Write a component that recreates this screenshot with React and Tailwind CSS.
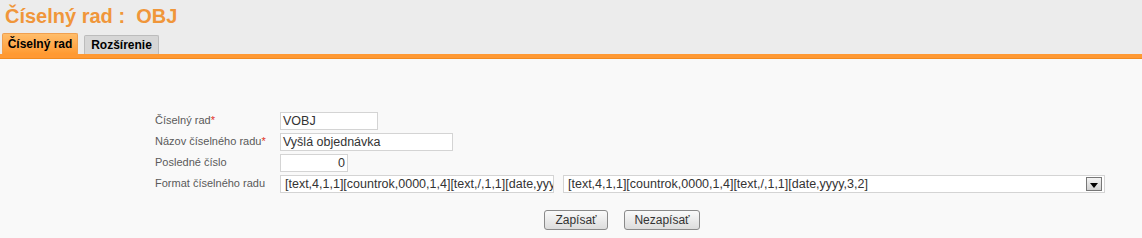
import React from "react";

function Row({ label, req, children }) {
  return (
    <div className="flex items-center h-[21px]">
      <div className="w-[125px] text-[11px] text-[#5a5a5a]">
        {label}
        {req && <span className="text-[#e0301e]">*</span>}
      </div>
      {children}
    </div>
  );
}

export default function App() {
  return (
    <div className="w-[1142px] h-[238px] bg-[#f9f9f9] font-['Liberation_Sans',sans-serif]">
      <div className="bg-[#ececec] pt-[5px]">
        <h1 className="pl-[5px] text-[20px] leading-[22px] font-bold text-[#f0963a]">
          Číselný rad :&nbsp; OBJ
        </h1>
        <div className="flex items-end gap-[6px] pl-[2px] mt-[6px]">
          <div className="w-[76px] h-[21px] rounded-t-[2px] border border-[#f0a050] border-b-0 bg-gradient-to-b from-[#ffbd6a] to-[#ff9a30] flex items-center justify-center text-[12px] font-bold text-black">
            Číselný rad
          </div>
          <div className="w-[75px] h-[19px] rounded-t-[2px] border border-[#bcbcbc] border-b-0 bg-[#d6d6d6] flex items-center justify-center text-[12px] font-bold text-black">
            Rozšírenie
          </div>
        </div>
      </div>
      <div className="h-[5px] bg-[#ff9933] border-b border-[#f08a20]" />
      <div className="pl-[155px] pt-[51px]">
        <Row label="Číselný rad" req>
          <div className="w-[98px] h-[18px] border border-[#d4d4d4] bg-white text-[12.5px] leading-[16px] px-[2px] text-[#333]">VOBJ</div>
        </Row>
        <Row label="Názov číselného radu" req>
          <div className="w-[173px] h-[18px] border border-[#d4d4d4] bg-white text-[12.5px] leading-[16px] px-[2px] text-[#333]">Vyšlá objednávka</div>
        </Row>
        <Row label="Posledné číslo">
          <div className="w-[68px] h-[18px] border border-[#d4d4d4] bg-white text-[12.5px] leading-[16px] px-[2px] text-right text-[#333]">0</div>
        </Row>
        <Row label="Format číselného radu">
          <div className="w-[274px] h-[18px] border border-[#d4d4d4] bg-white text-[12.5px] leading-[16px] pl-[4px] text-[#333] overflow-hidden whitespace-nowrap">
            [text,4,1,1][countrok,0000,1,4][text,/,1,1][date,yyyy
          </div>
          <div className="ml-[9px] w-[542px] h-[18px] border border-[#d4d4d4] bg-white text-[12.5px] leading-[16px] pl-[4px] text-[#333] flex items-center justify-between">
            <span>[text,4,1,1][countrok,0000,1,4][text,/,1,1][date,yyyy,3,2]</span>
            <span className="mr-[2px] w-[16px] h-[14px] border border-[#777] bg-gradient-to-b from-[#f4f4f4] to-[#d0d0d0] flex items-end justify-center pb-[2px]">
              <svg width="8" height="5" viewBox="0 0 8 5"><path d="M0 0H8L4 5Z" fill="#000" /></svg>
            </span>
          </div>
        </Row>
        <div className="flex gap-[16px] pl-[389px] mt-[16px]">
          <button className="w-[64px] h-[20px] border border-[#8a8a8a] rounded-[3px] bg-gradient-to-b from-[#fafafa] to-[#dcdcdc] text-[12px] text-[#333]">Zapísať</button>
          <button className="w-[76px] h-[20px] border border-[#8a8a8a] rounded-[3px] bg-gradient-to-b from-[#fafafa] to-[#dcdcdc] text-[12px] text-[#333]">Nezapísať</button>
        </div>
      </div>
    </div>
  );
}
